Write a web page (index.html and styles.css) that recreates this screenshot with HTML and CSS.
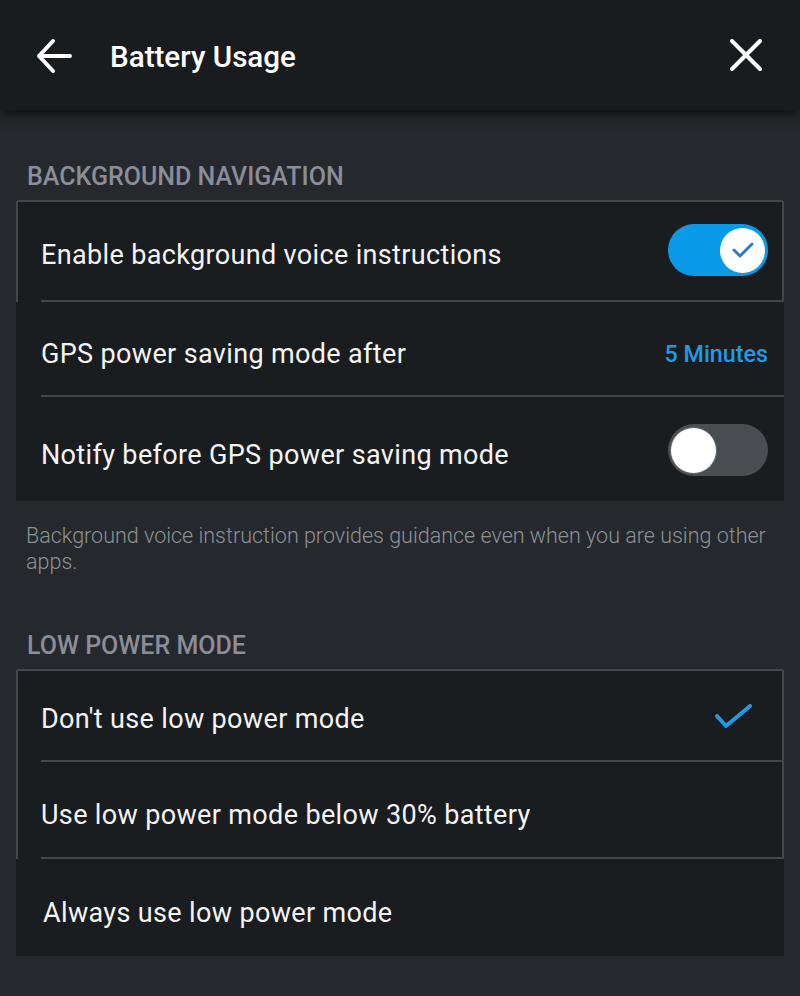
FILE: index.html
```html
<!DOCTYPE html>
<html lang="en">
<head>
    <meta charset="UTF-8">
    <meta name="viewport" content="width=device-width, initial-scale=1.0">
    <title>Battery Usage</title>
    <link rel="stylesheet" href="styles.css">
</head>
<body>
    <header class="topbar">
        <button class="icon-btn back" aria-label="Back">
            <svg width="36" height="36" viewBox="0 0 36 36" fill="none" stroke="#fff" stroke-width="4" stroke-linecap="round" stroke-linejoin="round">
                <path d="M34 18H3M17 3L3 18L17 33"/>
            </svg>
        </button>
        <h1 class="title">Battery Usage</h1>
        <button class="icon-btn close" aria-label="Close">
            <svg width="32" height="32" viewBox="0 0 32 32" fill="none" stroke="#fff" stroke-width="4" stroke-linecap="round">
                <path d="M2 2L30 30M30 2L2 30"/>
            </svg>
        </button>
    </header>

    <main class="content">
        <section class="group">
            <h2 class="group-title">BACKGROUND NAVIGATION</h2>
            <div class="card">
                <div class="row framed">
                    <div class="row-inner r1">
                        <span class="label">Enable background voice instructions</span>
                        <span class="toggle on"><span class="knob">
                            <svg width="28" height="28" viewBox="0 0 28 28" fill="none" stroke="#2f7dc0" stroke-width="3" stroke-linecap="round" stroke-linejoin="round">
                                <path d="M5 14L11 20L23 8"/>
                            </svg>
                        </span></span>
                    </div>
                </div>
                <div class="row">
                    <div class="row-inner r2">
                        <span class="label">GPS power saving mode after</span>
                        <span class="value">5 Minutes</span>
                    </div>
                </div>
                <div class="row">
                    <div class="row-inner r3 last">
                        <span class="label">Notify before GPS power saving mode</span>
                        <span class="toggle off"><span class="knob"></span></span>
                    </div>
                </div>
            </div>
            <p class="note">Background voice instruction provides guidance even when you are using other apps.</p>
        </section>

        <section class="group second">
            <h2 class="group-title">LOW POWER MODE</h2>
            <div class="card">
                <div class="row framed">
                    <div class="row-inner p1">
                        <span class="label">Don't use low power mode</span>
                        <svg class="check" width="38" height="26" viewBox="0 0 38 26" fill="none" stroke="#1d9be6" stroke-width="4" stroke-linecap="round" stroke-linejoin="round">
                            <path d="M2 12L11 22L35 2"/>
                        </svg>
                    </div>
                </div>
                <div class="row framed sides">
                    <div class="row-inner p2">
                        <span class="label">Use low power mode below 30% battery</span>
                    </div>
                </div>
                <div class="row">
                    <div class="row-inner p3 last">
                        <span class="label">Always use low power mode</span>
                    </div>
                </div>
            </div>
        </section>
    </main>
</body>
</html>
```

FILE: styles.css
```css
body {
    margin: 0;
    background: #25292d;
    font-family: Roboto, "Noto Sans", sans-serif;
    color: #f2f2f2;
    height: 996px;
    overflow: hidden;
}
.topbar {
    height: 110px;
    background: #191c1f;
    display: flex;
    align-items: center;
    padding: 0 36px 0 36px;
    box-sizing: border-box;
    box-shadow: 0 3px 12px rgba(0, 0, 0, 0.75);
    position: relative;
}
.icon-btn {
    background: none;
    border: none;
    padding: 0;
    display: flex;
    cursor: pointer;
}
.back {
    margin-right: 38px;
    margin-top: 1px;
}
.title {
    font-size: 29.6px;
    font-weight: 500;
    margin: 4px 0 0;
    flex: 1;
    color: #fff;
}
.close {
    margin-top: 0;
    margin-right: 2px;
}
.content {
    padding: 52px 16px 0;
}
.group-title {
    font-size: 25px;
    font-weight: 500;
    color: #8b8d99;
    margin: 0 0 8px 11px;
    line-height: 30px;
}
.second {
    margin-top: 56px;
}
.card {
    background: #1a1d20;
}
.row {
    padding-left: 25px;
}
.row.framed {
    box-shadow: inset 2px 0 #43474b, inset -2px 0 #43474b, inset 0 2px #43474b;
    border-radius: 3px 3px 0 0;
}
.row.framed.sides {
    box-shadow: inset 2px 0 #43474b, inset -2px 0 #43474b;
    border-radius: 0;
}
.row-inner {
    display: flex;
    align-items: center;
    justify-content: space-between;
    padding-right: 16px;
    border-bottom: 2px solid #43474b;
    box-sizing: content-box;
}
.row-inner.r1 { height: 100px; }
.row-inner.r2 { height: 91px; padding-top: 2px; }
.row-inner.r3 { height: 102px; padding-top: 2px; }
.row-inner.p1 { height: 91px; }
.row-inner.p2 { height: 93px; padding-top: 2px; }
.row-inner.p3 { height: 95px; padding-top: 2px; padding-left: 2px; }
.row-inner.last {
    border-bottom: none;
}
.label {
    font-size: 27px;
    color: #f4f4f4;
    letter-spacing: 0.35px;
    padding-top: 9px;
}
.value {
    font-size: 23.3px;
    font-weight: 500;
    color: #1d9be6;
    padding-top: 9px;
}
.toggle {
    width: 100px;
    height: 52px;
    border-radius: 26px;
    display: flex;
    align-items: center;
    padding: 0 3px;
    box-sizing: border-box;
}
.toggle.on {
    background: #0a9ae8;
    justify-content: flex-end;
}
.toggle.off {
    background: #4a4d51;
}
.knob {
    width: 45px;
    height: 45px;
    border-radius: 50%;
    background: #fff;
    display: flex;
    align-items: center;
    justify-content: center;
}
.toggle.off .knob {
    box-shadow: 0 0 0 1px #6a6d70;
}
.check {
    margin-right: 15px;
    margin-top: 5px;
}
.note {
    font-size: 21.5px;
    font-weight: 300;
    color: #8e9196;
    line-height: 26px;
    margin: 22px 0 0 10px;
    padding-right: 14px;
}
```
